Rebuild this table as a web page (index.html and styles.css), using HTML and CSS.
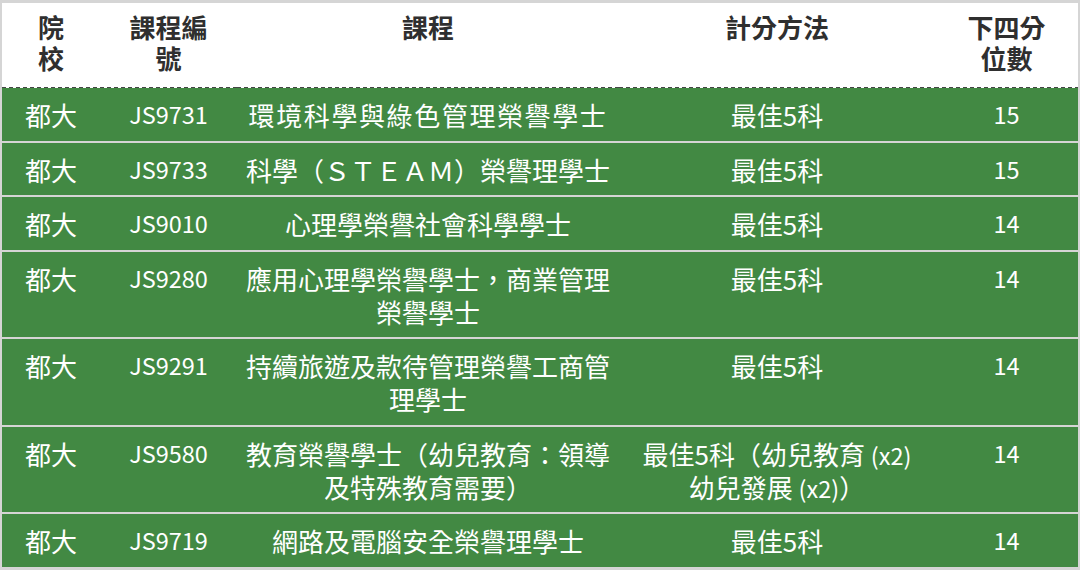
FILE: index.html
```
<!DOCTYPE html>
<html lang="zh-Hant">
<head>
<meta charset="utf-8">
<title>課程下四分位數</title>
<link rel="stylesheet" href="styles.css">
</head>
<body>
<div class="frame">
<table class="courses">
  <colgroup>
    <col class="c-school">
    <col class="c-code">
    <col class="c-name">
    <col class="c-method">
    <col class="c-score">
  </colgroup>
  <thead>
    <tr>
      <th>院<br>校</th>
      <th>課程編<br>號</th>
      <th>課程</th>
      <th>計分方法</th>
      <th>下四分<br>位數</th>
    </tr>
  </thead>
  <tbody>
    <tr>
      <td>都大</td>
      <td class="lat">JS9731</td>
      <td><span class="wide">環境科學與綠色管理榮譽學士</span></td>
      <td>最佳5科</td>
      <td class="lat">15</td>
    </tr>
    <tr>
      <td>都大</td>
      <td class="lat">JS9733</td>
      <td>科學（ＳＴＥＡＭ）榮譽理學士</td>
      <td>最佳5科</td>
      <td class="lat">15</td>
    </tr>
    <tr>
      <td>都大</td>
      <td class="lat">JS9010</td>
      <td>心理學榮譽社會科學學士</td>
      <td>最佳5科</td>
      <td class="lat">14</td>
    </tr>
    <tr>
      <td>都大</td>
      <td class="lat">JS9280</td>
      <td>應用心理學榮譽學士，商業管理<br>榮譽學士</td>
      <td>最佳5科</td>
      <td class="lat">14</td>
    </tr>
    <tr>
      <td>都大</td>
      <td class="lat">JS9291</td>
      <td>持續旅遊及款待管理榮譽工商管<br>理學士</td>
      <td>最佳5科</td>
      <td class="lat">14</td>
    </tr>
    <tr>
      <td>都大</td>
      <td class="lat">JS9580</td>
      <td>教育榮譽學士（幼兒教育：領導<br>及特殊教育需要）</td>
      <td>最佳5科（幼兒教育 <span class="sm">(x2)</span><br>幼兒發展 <span class="sm">(x2)</span>）</td>
      <td class="lat">14</td>
    </tr>
    <tr>
      <td>都大</td>
      <td class="lat">JS9719</td>
      <td>網路及電腦安全榮譽理學士</td>
      <td>最佳5科</td>
      <td class="lat">14</td>
    </tr>
  </tbody>
</table>
</div>
</body>
</html>
```

FILE: styles.css
```
html, body {
  margin: 0;
  padding: 0;
}

body {
  background: #d5d5d5;
  font-family: "Noto Sans CJK TC", "Noto Sans", sans-serif;
  width: 1080px;
  height: 570px;
  overflow: hidden;
}

.frame {
  padding: 3px 2px 0 2px;
}

.courses {
  width: 1076px;
  table-layout: fixed;
  border-collapse: collapse;
}

.c-school { width: 98px; }
.c-code { width: 137px; }
.c-name { width: 382px; }
.c-method { width: 316px; }
.c-score { width: 143px; }

.courses th {
  background-color: #ffffff;
  background-image: linear-gradient(to right, #454545 4px, transparent 4px);
  background-size: 7px 1.5px;
  background-repeat: repeat-x;
  background-position: left bottom;
  color: #2f2f2f;
  font-size: 26px;
  font-weight: 700;
  line-height: 31px;
  text-align: center;
  vertical-align: top;
  padding: 8px 0 15px;
}

.courses td {
  background: #428943;
  color: #ffffff;
  font-size: 26px;
  font-weight: 400;
  line-height: 33px;
  text-align: center;
  vertical-align: top;
  padding: 10px 0 9.5px;
}

.courses td.lat {
  font-size: 23.5px;
}

.courses td .sm {
  font-size: 23.5px;
  line-height: 1;
}

.courses tbody tr + tr td {
  border-top: 2px solid #d5d5d5;
}

.wide {
  letter-spacing: 1.6px;
}
```
